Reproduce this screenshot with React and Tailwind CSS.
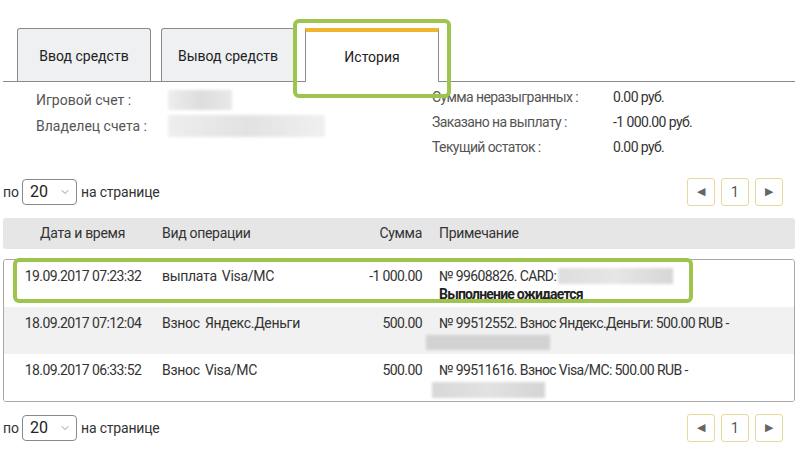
import { ChevronDown } from 'lucide-react'

const font = { fontFamily: 'Roboto, "Liberation Sans", sans-serif' }

function Blur({ className }) {
  return <div className={`blur-[1.5px] ${className}`} />
}

function PerPage() {
  return (
    <div className="flex items-center text-[14px] text-[#333]">
      <span className="ml-[3px] mr-[3px]">по</span>
      <div className="w-[55px] h-[26px] border border-[#888] rounded-[4px] flex items-center pl-[7px] pr-[5px] justify-between">
        <span className="text-[16px] text-[#222]">20</span>
        <ChevronDown size={12} strokeWidth={1.5} className="text-[#777]" />
      </div>
      <span className="ml-[4px] tracking-[-0.2px]">на странице</span>
    </div>
  )
}

function Pager() {
  return (
    <div className="flex gap-[6px] mr-[21px]">
      <div className="w-[28px] h-[28px] border border-[#e6d99c] rounded-[3px] flex items-center justify-center text-[#666] text-[11px]">◀</div>
      <div className="w-[28px] h-[28px] border border-[#e6d99c] rounded-[3px] flex items-center justify-center text-[#555] text-[14px]">1</div>
      <div className="w-[28px] h-[28px] border border-[#e6d99c] rounded-[3px] flex items-center justify-center text-[#666] text-[11px]">▶</div>
    </div>
  )
}

const rows = [
  {
    date: '19.09.2017 07:23:32',
    op: 'выплата Visa/MC',
    sum: '-1 000.00',
    note: (
      <>
        <div className="flex items-center">
          № 99608826. CARD:
          <Blur className="ml-[2px] w-[115px] h-[16px] bg-gradient-to-r from-[#ddd] via-[#e6e6e6] to-[#d6d6d6]" />
        </div>
        <div className="font-bold text-[#222] leading-[18px] tracking-[-0.8px]">Выполнение ожидается</div>
      </>
    ),
    bg: 'bg-white',
  },
  {
    date: '18.09.2017 07:12:04',
    op: 'Взнос Яндекс.Деньги',
    sum: '500.00',
    note: (
      <>
        <div>№ 99512552. Взнос Яндекс.Деньги: 500.00 RUB -</div>
        <Blur className="ml-[-13px] mt-[3px] w-[124px] h-[15px] bg-[#d2d2d2]" />
      </>
    ),
    bg: 'bg-[#f1f1f1]',
  },
  {
    date: '18.09.2017 06:33:52',
    op: 'Взнос Visa/MC',
    sum: '500.00',
    note: (
      <>
        <div>№ 99511616. Взнос Visa/MC: 500.00 RUB -</div>
        <Blur className="ml-[-7px] mt-[3px] w-[113px] h-[16px] bg-gradient-to-r from-[#d8d8d8] via-[#e2e2e2] to-[#d4d4d4]" />
      </>
    ),
    bg: 'bg-white',
  },
]

export default function App() {
  return (
    <div className="w-[804px] h-[462px] bg-white relative overflow-hidden text-[#333]" style={font}>
      {/* tabs */}
      <div className="pt-[28px] ml-[3px] mr-[9px] border-b border-[#8a8a8a] flex gap-[10px] pl-[14px]">
        <div className="w-[134px] h-[53px] pt-[3px] bg-[#eef0f2] border border-[#8a8a8a] border-b-0 rounded-t-[3px] flex items-center justify-center text-[14px] text-[#222]">Ввод средств</div>
        <div className="w-[134px] h-[53px] pt-[3px] bg-[#eef0f2] border border-[#8a8a8a] border-b-0 rounded-t-[3px] flex items-center justify-center text-[14px] text-[#222]">Вывод средств</div>
        <div className="w-[134px] h-[54px] mb-[-1px] bg-white border border-[#8a8a8a] border-t-[4px] border-t-[#f0b52e] border-b-0 flex items-center justify-center text-[14px] text-[#222]">История</div>
      </div>
      <div className="absolute left-[293px] top-[19px] w-[158px] h-[79px] border-[4px] border-[#9dc44d] rounded-[6px]" />

      {/* account info */}
      <div className="flex text-[14px] text-[#555] mt-[6px]">
        <div className="ml-[36px] w-[396px] flex flex-col">
          <div className="flex items-center h-[24px]">
            <span className="w-[132px]">Игровой счет :</span>
            <Blur className="w-[64px] h-[20px] bg-gradient-to-r from-[#eee] via-[#ddd] to-[#e8e8e8]" />
          </div>
          <div className="flex items-center h-[28px]">
            <span className="w-[132px]">Владелец счета :</span>
            <Blur className="w-[157px] h-[22px] bg-gradient-to-r from-[#eee] via-[#e2e2e2] to-[#f0f0f0]" />
          </div>
        </div>
        <div className="flex flex-col leading-[25px] mt-[-3px] tracking-[-0.6px]">
          <div className="flex"><span className="w-[181px]">Сумма неразыгранных :</span><span className="text-[#333]">0.00 руб.</span></div>
          <div className="flex"><span className="w-[181px]">Заказано на выплату :</span><span className="text-[#333]">-1 000.00 руб.</span></div>
          <div className="flex"><span className="w-[181px]">Текущий остаток :</span><span className="text-[#333]">0.00 руб.</span></div>
        </div>
      </div>

      {/* top pager */}
      <div className="flex items-center justify-between mt-[18px]">
        <PerPage />
        <Pager />
      </div>

      {/* table */}
      <div className="mx-[3px] w-[792px] mt-[12px]">
        <div className="grid grid-cols-[159px_200px_60px_1fr] h-[31px] items-center bg-[#e6e6e6] rounded-[3px] text-[14px] text-[#333] tracking-[-0.3px]">
          <div className="text-center">Дата и время</div>
          <div>Вид операции</div>
          <div className="text-right">Сумма</div>
          <div className="pl-[17px]">Примечание</div>
        </div>
        <div className="mt-[10px] border border-[#a8a8a8] rounded-[3px] overflow-hidden">
          {rows.map((r, i) => (
            <div key={i} className={`grid grid-cols-[158px_200px_60px_1fr] h-[47px] pt-[7px] text-[14px] text-[#333] tracking-[-0.6px] ${r.bg}`}>
              <div className="text-center leading-[18px]">{r.date}</div>
              <div className="leading-[18px] tracking-[-0.3px] [word-spacing:2px]">{r.op}</div>
              <div className="text-right leading-[18px]">{r.sum}</div>
              <div className="pl-[17px] leading-[18px]">{r.note}</div>
            </div>
          ))}
        </div>
      </div>
      <div className="absolute left-[13px] top-[258px] w-[680px] h-[45px] border-[4px] border-[#9dc44d] rounded-[6px]" />

      {/* bottom pager */}
      <div className="flex items-center justify-between mt-[12px]">
        <PerPage />
        <Pager />
      </div>
    </div>
  )
}
